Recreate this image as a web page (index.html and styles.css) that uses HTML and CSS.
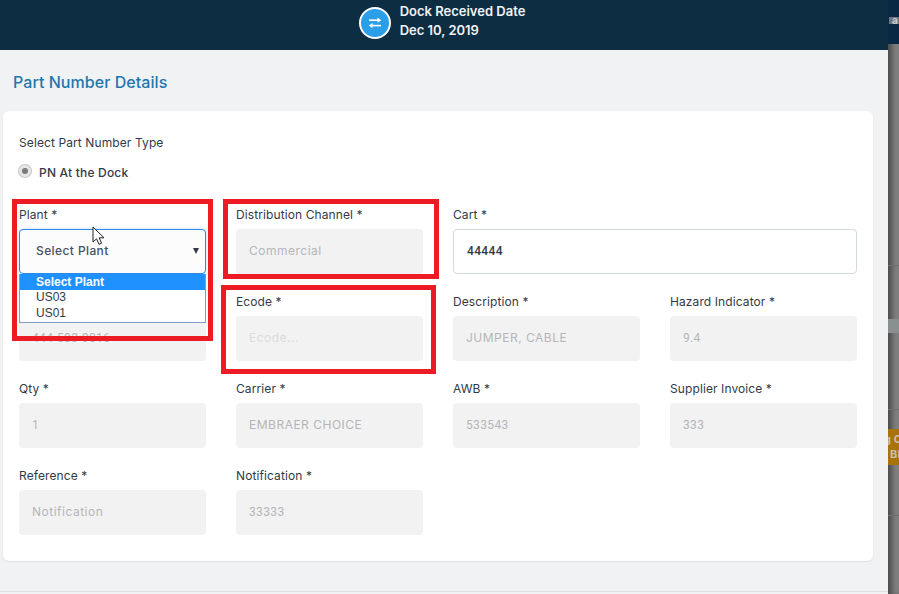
FILE: index.html
```html
<!DOCTYPE html>
<html lang="en">
<head>
  <meta charset="UTF-8">
  <title>Part Number Details</title>
  <link rel="stylesheet" href="styles.css">
</head>
<body>

  <div class="screen">
    <div class="modal">
      <header class="topbar">
        <span class="topbar-icon">
          <svg width="14" height="12" viewBox="0 0 14 12">
            <path d="M1 3.2H10" fill="none" stroke="#fff" stroke-width="1.6"/>
            <path d="M9.5 0.6L13.2 3.2L9.5 5.8Z" fill="#fff"/>
            <path d="M13 8.6H4" fill="none" stroke="#fff" stroke-width="1.6"/>
            <path d="M4.5 6L0.8 8.6L4.5 11.2Z" fill="#fff"/>
          </svg>
        </span>
        <div class="topbar-text">
          <div>Dock Received Date</div>
          <div>Dec 10, 2019</div>
        </div>
      </header>

      <div class="content">
        <h2 class="page-title">Part Number Details</h2>

        <div class="card">
          <p class="type-label">Select Part Number Type</p>
          <label class="radio-row">
            <span class="radio"></span>
            PN At the Dock
          </label>

          <div class="form-grid">
            <div class="field">
              <label>Plant *</label>
              <div class="select-box focus">
                Select Plant
                <span class="caret"></span>
              </div>
              <ul class="select-list">
                <li class="active">Select Plant</li>
                <li>US03</li>
                <li>US01</li>
              </ul>
              <div class="annot annot-plant"></div>
              <svg class="cursor" width="14" height="20" viewBox="0 0 14 20">
                <path d="M1 1V16L4.6 12.8L7 18.4L9.6 17.2L7.2 11.8H12Z" fill="#fff" stroke="#222" stroke-width="1"/>
              </svg>
            </div>
            <div class="field">
              <label>Distribution Channel *</label>
              <div class="input">Commercial</div>
              <div class="annot annot-channel"></div>
            </div>
            <div class="field span-2">
              <label>Cart *</label>
              <div class="input editable num">44444</div>
            </div>

            <div class="field">
              <label class="hidden-label">Part Number *</label>
              <div class="input num">444-583-9016</div>
            </div>
            <div class="field">
              <label>Ecode *</label>
              <div class="input placeholder">Ecode...</div>
              <div class="annot annot-ecode"></div>
            </div>
            <div class="field">
              <label>Description *</label>
              <div class="input">JUMPER, CABLE</div>
            </div>
            <div class="field">
              <label>Hazard Indicator *</label>
              <div class="input num">9.4</div>
            </div>

            <div class="field">
              <label>Qty *</label>
              <div class="input num">1</div>
            </div>
            <div class="field">
              <label>Carrier *</label>
              <div class="input">EMBRAER CHOICE</div>
            </div>
            <div class="field">
              <label>AWB *</label>
              <div class="input num">533543</div>
            </div>
            <div class="field">
              <label>Supplier Invoice *</label>
              <div class="input num">333</div>
            </div>

            <div class="field">
              <label>Reference *</label>
              <div class="input">Notification</div>
            </div>
            <div class="field">
              <label>Notification *</label>
              <div class="input num">33333</div>
            </div>
          </div>
        </div>

        <div class="bottom-line"></div>
      </div>
    </div>

    <div class="backdrop">
      <div class="backdrop-top"><span class="backdrop-tag">a</span></div>
      <div class="backdrop-row r1"></div>
      <div class="backdrop-row r2"></div>
      <div class="backdrop-row r3"></div>
      <div class="backdrop-chip"><div class="chip-first">g C</div>BI</div>
      <div class="backdrop-row r4"></div>
    </div>
  </div>

</body>
</html>
```

FILE: styles.css
```css
* {
  box-sizing: border-box;
}
html, body {
  margin: 0;
  height: 100%;
  overflow: hidden;
}
body {
  font-family: 'Inter', 'Liberation Sans', sans-serif;
  font-size: 12px;
  letter-spacing: 0.1px;
  color: #333a47;
}
.screen {
  display: flex;
  width: 899px;
  height: 594px;
}
.modal {
  width: 888px;
  flex: none;
  display: flex;
  flex-direction: column;
  background: #f1f2f4;
}
.topbar {
  height: 50px;
  flex: none;
  background: #0c2d42;
  color: #f0f2f5;
  display: flex;
  align-items: center;
  justify-content: center;
  gap: 9px;
  font-size: 13px;
  font-weight: 600;
  letter-spacing: 0;
  padding: 0 4px 5px 0;
}
.topbar-icon {
  width: 32px;
  height: 32px;
  border: 2px solid #fff;
  border-radius: 50%;
  background: #2b9ee8;
  display: flex;
  align-items: center;
  justify-content: center;
}
.topbar-text {
  line-height: 19px;
  margin-top: -4px;
}
.content {
  flex: 1;
  padding: 0 15px 0 3px;
  position: relative;
}
.page-title {
  margin: 0;
  padding: 23px 0 0 10px;
  height: 61px;
  font-size: 16px;
  font-weight: 500;
  line-height: 19px;
  letter-spacing: 0.05px;
  color: #1f76ad;
}
.card {
  height: 450px;
  background: #fff;
  border-radius: 6px;
  box-shadow: 0 1px 2px rgba(0, 0, 0, 0.08);
  padding: 24px 16px 0;
}
.type-label {
  margin: 0;
  line-height: 15px;
}
.radio-row {
  display: flex;
  align-items: center;
  gap: 8px;
  margin-top: 15px;
  line-height: 15px;
  font-weight: 500;
  letter-spacing: 0.2px;
}
.radio {
  width: 12px;
  height: 12px;
  border-radius: 50%;
  background: #7a7a7a;
  border: 3px solid #e6e6e6;
  box-shadow: 0 0 0 1px #c8c8c8;
  margin-top: -4px;
}
.form-grid {
  display: grid;
  grid-template-columns: repeat(4, 187px);
  column-gap: 30px;
  grid-auto-rows: 87px;
  margin-top: 27px;
}
.field {
  position: relative;
}
.span-2 {
  grid-column: span 2;
}
.field label {
  display: block;
  height: 22px;
  line-height: 15px;
}
.field label.hidden-label {
  visibility: hidden;
}
.input {
  height: 45px;
  background: #f2f2f2;
  border-radius: 4px;
  padding: 0 13px;
  line-height: 43px;
  color: #b4b6bb;
  letter-spacing: 0.5px;
}
.input.num {
  font-family: 'Roboto', 'Inter', sans-serif;
  letter-spacing: 0.35px;
  line-height: 45px;
}
.input.placeholder {
  color: #dcdcdc;
}
.input.editable {
  background: #fff;
  border: 1px solid #d3d9e3;
  color: #333a47;
  line-height: 43px;
  font-weight: 500;
}
.select-box {
  height: 45px;
  padding: 0 16px;
  line-height: 41px;
  background: #fcfcfc;
  border: 1px solid #2b8ce6;
  border-radius: 4px;
  color: #47505f;
  font-weight: 500;
  letter-spacing: 0.4px;
  position: relative;
  box-shadow: 0 0 3px rgba(43, 140, 230, 0.35);
}
.caret {
  position: absolute;
  right: 6px;
  top: 18px;
  border-left: 3px solid transparent;
  border-right: 3px solid transparent;
  border-top: 6px solid #333a47;
}
.select-list {
  position: absolute;
  top: 67px;
  left: 0;
  width: 187px;
  margin: 0;
  padding: 0;
  list-style: none;
  background: #fff;
  border: 1px solid #7f9dc9;
  border-top: 0;
  z-index: 2;
  font-family: 'Liberation Sans', sans-serif;
  letter-spacing: 0;
  color: #333a47;
}
.select-list li {
  height: 16px;
  line-height: 15px;
  padding-left: 16px;
}
.select-list li.active {
  line-height: 16px;
  background: #1e90ff;
  color: #fff;
  font-weight: 700;
}
.annot {
  position: absolute;
  border: 5px solid #ed1c24;
  z-index: 3;
  pointer-events: none;
}
.annot-plant {
  left: -7px;
  top: -8px;
  width: 201px;
  height: 142px;
}
.annot-channel {
  left: -13px;
  top: -8px;
  width: 216px;
  height: 80px;
}
.annot-ecode {
  left: -15px;
  top: -9px;
  width: 215px;
  height: 89px;
}
.cursor {
  position: absolute;
  left: 73px;
  top: 19px;
  z-index: 4;
}
.bottom-line {
  position: absolute;
  left: 0;
  right: 0;
  bottom: 2px;
  height: 1px;
  background: #dfe0e2;
}
.backdrop {
  flex: 1;
  background: #7f7f7f;
  box-shadow: inset 6px 0 5px -2px rgba(0, 0, 0, 0.4);
  position: relative;
}
.backdrop-top {
  height: 44px;
  padding: 17px 0 0 1px;
  background: #0a2745;
}
.backdrop-tag {
  display: block;
  height: 7px;
  background: #6c7480;
  color: #c5ccd4;
  font-weight: 700;
  font-size: 10px;
  line-height: 7px;
  padding-left: 3px;
}
.backdrop-row {
  position: absolute;
  left: 0;
  right: 0;
  height: 1px;
  background: #6e6e6e;
}
.r1 { top: 265px; }
.r2 { top: 319px; height: 14px; background: #8a8f90; }
.r3 { top: 409px; }
.r4 { top: 515px; }
.backdrop-chip {
  position: absolute;
  top: 429px;
  left: 0;
  right: 0;
  height: 36px;
  overflow: hidden;
  background: #a9720a;
  color: #c8c0ae;
  font-weight: 700;
  font-size: 11px;
  line-height: 15px;
  padding: 3px 0 0 2px;
  white-space: nowrap;
}
.chip-first {
  text-indent: -6px;
}
```
